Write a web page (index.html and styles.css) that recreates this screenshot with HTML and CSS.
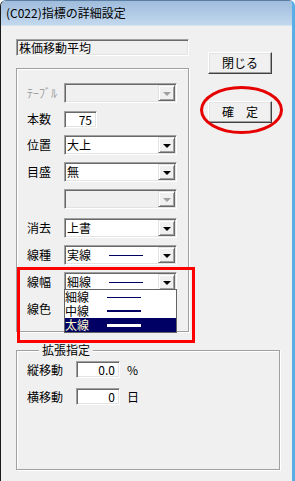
FILE: index.html
```html
<!DOCTYPE html>
<html lang="ja">
<head>
<meta charset="utf-8">
<link rel="stylesheet" href="styles.css">
</head>
<body>
<div class="window">
  <div class="titlebar">(C022)指標の詳細設定</div>
  <div class="client">
    <div class="top">
      <div class="left">
        <div class="namebox">株価移動平均</div>
        <div class="group group-main">
          <div class="row"><span class="label disabled">ﾃｰﾌﾞﾙ</span><div class="combo disabled"><span class="combo-text"></span><span class="dd"></span></div></div>
          <div class="row row-short"><span class="label">本数</span><div class="field num w-count">75</div></div>
          <div class="row"><span class="label">位置</span><div class="combo"><span class="combo-text">大上</span><span class="dd"></span></div></div>
          <div class="row"><span class="label">目盛</span><div class="combo"><span class="combo-text">無</span><span class="dd"></span></div></div>
          <div class="row"><span class="label"></span><div class="combo disabled"><span class="combo-text"></span><span class="dd"></span></div></div>
          <div class="row row-sep"><span class="label">消去</span><div class="combo"><span class="combo-text">上書</span><span class="dd"></span></div></div>
          <div class="row"><span class="label">線種</span><div class="combo"><span class="combo-text opt"><span class="opt-name">実線</span><span class="swatch s1"></span></span><span class="dd"></span></div></div>
          <div class="row"><span class="label">線幅</span>
            <div class="combo open"><span class="combo-text opt"><span class="opt-name">細線</span><span class="swatch s1"></span></span><span class="dd"></span>
              <div class="listbox">
                <div class="item opt"><span class="opt-name">細線</span><span class="swatch s1"></span></div>
                <div class="item opt"><span class="opt-name">中線</span><span class="swatch s2"></span></div>
                <div class="item opt selected"><span class="opt-name">太線</span><span class="swatch s3"></span></div>
              </div>
            </div>
          </div>
          <div class="row"><span class="label">線色</span><div class="combo"><span class="combo-text"></span><span class="dd"></span></div></div>
        </div>
      </div>
      <div class="buttons">
        <div class="btn">閉じる</div>
        <div class="btn">確　定</div>
      </div>
    </div>
    <fieldset class="group group-ext">
      <legend>拡張指定</legend>
      <div class="ext-row"><span class="ext-label">縦移動</span><div class="field num w-ext">0.0</div><span class="unit">%</span></div>
      <div class="ext-row"><span class="ext-label">横移動</span><div class="field num w-ext">0</div><span class="unit">日</span></div>
    </fieldset>
  </div>
  <div class="mark-rect"></div>
  <div class="mark-ellipse"></div>
</div>
</body>
</html>
```
FILE: styles.css
```css
* { box-sizing: border-box; }
html, body { margin: 0; padding: 0; }
body {
  width: 295px;
  height: 481px;
  overflow: hidden;
  background: #ffffff;
  font-family: "Noto Sans CJK JP", "Noto Sans", sans-serif;
  font-size: 12px;
  color: #000;
}
.window {
  position: relative;
  width: 295px;
  height: 481px;
  background: #f0f0f0;
  border-left: 1px solid #1a1a1a;
  border-right: 3px solid #5aaee6;
  border-top: 1px solid #5d7ea3;
  border-radius: 6px 6px 0 0;
  overflow: hidden;
}
.titlebar {
  height: 25px;
  padding: 3px 0 0 5px;
  line-height: 18px;
  font-size: 12px;
  background: linear-gradient(#9fbcdc, #c2d8ee);
  color: #000;
  border-bottom: 1px solid #d6e4f2;
}
.client {
  padding: 13px 0 0 15px;
}
.top {
  display: grid;
  grid-template-columns: 173px 64px;
  column-gap: 19px;
}
.namebox {
  height: 17px;
  background: #f0f0f0;
  border: 1px solid;
  border-color: #a0a0a0 #ffffff #ffffff #a0a0a0;
  box-shadow: inset 1px 1px #696969, inset -1px -1px #e3e3e3;
  padding-left: 2px;
  line-height: 15px;
  white-space: nowrap;
}
.group {
  border: 1px solid #a0a0a0;
  box-shadow: 1px 1px 0 #ffffff, inset 1px 1px 0 #ffffff;
}
.group-main {
  margin-top: 12px;
  height: 264px;
  padding: 14px 0 0 10px;
  display: flex;
  flex-direction: column;
  gap: 7px;
}
.row {
  display: flex;
  align-items: center;
  height: 20px;
}
.row-short { height: 18px; }
.row-sep { margin-top: 2px; }
.label {
  width: 37px;
  flex: none;
  line-height: 14px;
  white-space: nowrap;
}
.label.disabled { color: #a0a0a0; }
.combo {
  position: relative;
  width: 113px;
  height: 20px;
  background: #ffffff;
  border: 1px solid;
  border-color: #a0a0a0 #ffffff #ffffff #a0a0a0;
  box-shadow: inset 1px 1px #696969, inset -1px -1px #e3e3e3;
  padding: 1px;
  display: flex;
  align-items: stretch;
}
.combo.disabled { background: #f0f0f0; }
.combo-text {
  flex: 1;
  padding-left: 1px;
  line-height: 16px;
  white-space: nowrap;
}
.opt { display: flex; align-items: center; }
.opt-name { width: 42px; flex: none; line-height: 14px; }
.swatch { width: 34px; height: 1px; background: #000060; flex: none; }
.swatch.s2 { height: 2px; }
.swatch.s3 { height: 3px; }
.dd {
  width: 17px;
  flex: none;
  background: #f0f0f0;
  border: 1px solid;
  border-color: #e3e3e3 #696969 #696969 #e3e3e3;
  box-shadow: inset 1px 1px #ffffff, inset -1px -1px #a0a0a0;
  display: flex;
  align-items: center;
  justify-content: center;
}
.dd::after {
  content: "";
  width: 0;
  height: 0;
  border-top: 4px solid #000;
  border-left: 4px solid transparent;
  border-right: 4px solid transparent;
  margin-top: 1px;
}
.combo.disabled .dd::after { border-top-color: #a0a0a0; }
.listbox {
  position: absolute;
  left: -1px;
  top: 16px;
  width: 113px;
  height: 44px;
  background: #ffffff;
  border: 1px solid #646464;
  z-index: 2;
}
.item {
  height: 14px;
  line-height: 14px;
}
.item.selected { background: #000064; color: #fffbc8; }
.item.selected .swatch { background: #ffffff; }
.field {
  height: 17px;
  background: #ffffff;
  border: 1px solid;
  border-color: #a0a0a0 #ffffff #ffffff #a0a0a0;
  box-shadow: inset 1px 1px #696969, inset -1px -1px #e3e3e3;
  line-height: 15px;
}
.num { text-align: right; padding-right: 4px; }
.w-count { width: 33px; }
.w-ext { width: 44px; }
.buttons {
  display: flex;
  flex-direction: column;
  gap: 27px;
  padding-top: 13px;
}
.btn {
  height: 22px;
  background: #f0f0f0;
  border: 1px solid;
  border-color: #ffffff #404040 #404040 #ffffff;
  box-shadow: inset -1px -1px #a0a0a0, inset 1px 1px #e3e3e3;
  text-align: center;
  line-height: 20px;
}
.group-ext {
  margin: 11px 0 0 0;
  padding: 4px 0 0 10px;
  width: 264px;
  height: 127px;
  min-inline-size: 0;
}
.group-ext legend {
  margin-left: 12px;
  padding: 0 3px;
  line-height: 14px;
  background: #f0f0f0;
}
.ext-row {
  display: flex;
  align-items: center;
  height: 17px;
  margin-bottom: 10px;
}
.ext-label { width: 49px; flex: none; line-height: 14px; }
.unit { margin-left: 7px; line-height: 14px; }
.mark-rect {
  position: absolute;
  left: 16px;
  top: 266px;
  width: 178px;
  height: 76px;
  border: 3px solid #ff0000;
  z-index: 3;
}
.mark-ellipse {
  position: absolute;
  left: 199px;
  top: 85px;
  width: 83px;
  height: 48px;
  border: 3px solid #e60000;
  border-radius: 50%;
  z-index: 3;
}
```
